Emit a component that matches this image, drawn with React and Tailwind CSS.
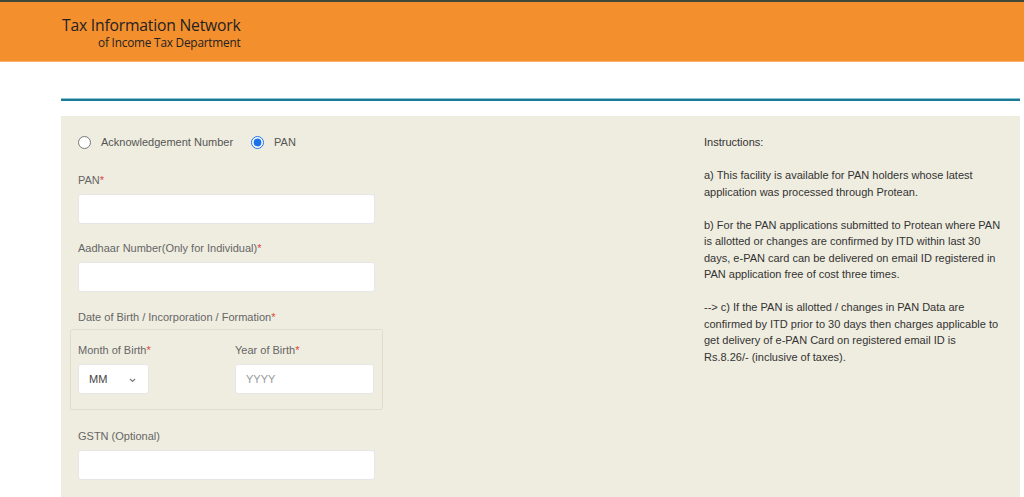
const Label = ({ children, required }) => (
  <div className="h-4 leading-4 mb-[6px] text-[11px] text-[#666]">
    {children}
    {required && <span className="text-[#e0453a]">*</span>}
  </div>
);

const TextInput = ({ placeholder }) => (
  <input
    type="text"
    placeholder={placeholder}
    className="block w-[297px] h-[30px] bg-white border border-[#e6e6e6] rounded-[3px] px-[10px] text-[11px] text-[#333] placeholder:text-[#999] outline-none"
  />
);

export default function App() {
  return (
    <div className="min-h-[497px] bg-white font-['Liberation_Sans',Arial,sans-serif]">
      <div className="h-[2px] bg-[#3d4838]" />
      <header className="h-[60px] bg-[#f48f2e] border-b border-[#f7b06a] pl-[62px] pt-[13px]">
        <div className="inline-block text-right font-['Open_Sans','Noto_Sans',sans-serif] text-[#222]">
          <div className="text-[15.7px] leading-[20px] tracking-[-0.2px]">Tax Information Network</div>
          <div className="text-[11.8px] leading-[15px] tracking-[-0.2px]">of Income Tax Department</div>
        </div>
      </header>

      <div className="ml-[61px] mr-[4px]">
        <div className="mt-[36px] h-[3px] bg-[#1a7a96] border-t border-[#8cc4d4]" />
        <div className="mt-[15px] bg-[#efede0] pl-[17px] pt-[18px] pb-[20px] flex">
          <div className="w-[626px]">
            <div className="h-4 flex items-center text-[11px] text-[#555]">
              <input type="radio" name="mode" className="w-[13px] h-[13px] m-0" />
              <span className="ml-[10px]">Acknowledgement Number</span>
              <input type="radio" name="mode" defaultChecked className="w-[13px] h-[13px] m-0 ml-[18px] accent-[#1a73e8]" />
              <span className="ml-[10px]">PAN</span>
            </div>

            <div className="mt-[22px]">
              <Label required>PAN</Label>
              <TextInput />
            </div>

            <div className="mt-[16px]">
              <Label required>Aadhaar Number(Only for Individual)</Label>
              <TextInput />
            </div>

            <div className="mt-[17px]">
              <div className="h-4 leading-4 mb-[4px] text-[11px] text-[#666]">
                Date of Birth / Incorporation / Formation<span className="text-[#e0453a]">*</span>
              </div>
              <div className="-ml-[8px] w-[313px] border border-[#e0ddcc] rounded-[2px] pl-[7px] pt-[12px] pb-[15px] flex">
                <div className="w-[157px]">
                  <Label required>Month of Birth</Label>
                  <div className="relative w-[71px] h-[30px] bg-white border border-[#e6e6e6] rounded-[3px] flex items-center pl-[10px] text-[11px] text-[#444]">
                    MM
                    <svg className="absolute right-[12px] top-[13px]" width="7" height="5" viewBox="0 0 7 5" fill="none">
                      <path d="M1 1l2.5 2.5L6 1" stroke="#777" strokeWidth="1.1" />
                    </svg>
                  </div>
                </div>
                <div>
                  <Label required>Year of Birth</Label>
                  <input
                    type="text"
                    placeholder="YYYY"
                    className="block w-[139px] h-[30px] bg-white border border-[#e6e6e6] rounded-[3px] px-[10px] text-[11px] placeholder:text-[#999] outline-none"
                  />
                </div>
              </div>
            </div>

            <div className="mt-[18px]">
              <Label>GSTN (Optional)</Label>
              <TextInput />
            </div>
          </div>

          <div className="w-[299px] text-[11px] leading-[16.5px] text-[#333]">
            <p className="mb-[16.5px]">Instructions:</p>
            <p className="mb-[16.5px]">
              a) This facility is available for PAN holders whose latest application was processed through Protean.
            </p>
            <p className="mb-[16.5px]">
              b) For the PAN applications submitted to Protean where PAN is allotted or changes are confirmed by ITD within last 30 days, e-PAN card can be delivered on email ID registered in PAN application free of cost three times.
            </p>
            <p>
              --&gt; c) If the PAN is allotted / changes in PAN Data are confirmed by ITD prior to 30 days then charges applicable to get delivery of e-PAN Card on registered email ID is Rs.8.26/- (inclusive of taxes).
            </p>
          </div>
        </div>
      </div>
    </div>
  );
}
